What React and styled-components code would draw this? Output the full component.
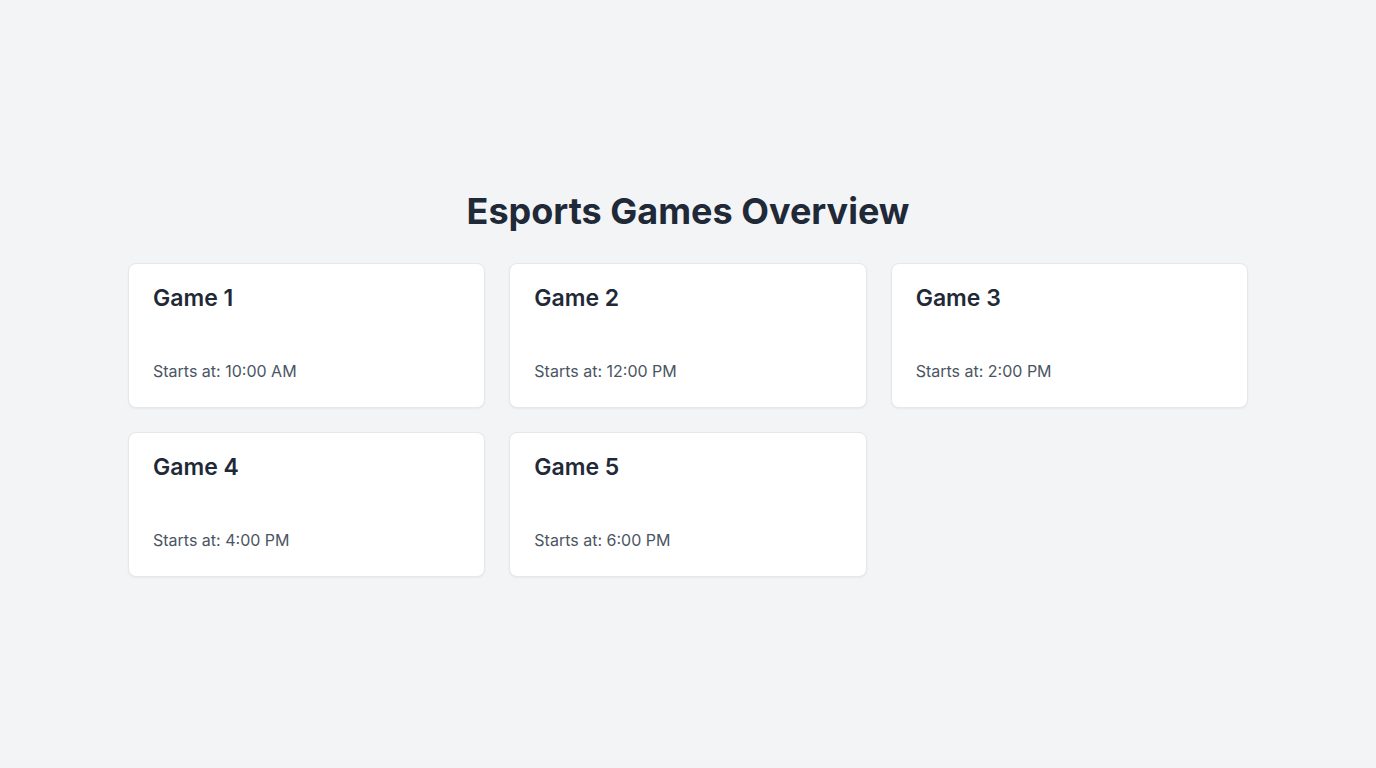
import React from 'react';
import styled, { createGlobalStyle } from 'styled-components';

const GlobalStyle = createGlobalStyle`
  * {
    box-sizing: border-box;
  }
  body {
    margin: 0;
    background: #f3f4f6;
    font-family: Inter, "Noto Sans", sans-serif;
  }
`;

const Page = styled.main`
  min-height: 100vh;
  display: flex;
  flex-direction: column;
  align-items: center;
  justify-content: center;
  padding: 0 16px;
`;

const Container = styled.div`
  width: 100%;
  max-width: 1120px;
`;

const Title = styled.h1`
  margin: 0 0 32px;
  text-align: center;
  font-size: 36px;
  line-height: 40px;
  font-weight: 700;
  color: #1f2937;
`;

const Grid = styled.div`
  display: grid;
  grid-template-columns: repeat(3, 1fr);
  gap: 24px;
`;

const Card = styled.div`
  background: #ffffff;
  border: 1px solid #e5e7eb;
  border-radius: 8px;
  box-shadow: 0 1px 2px rgba(0, 0, 0, 0.05);
  padding: 24px;
`;

const GameName = styled.h2`
  margin: 0 0 51px;
  font-size: 23px;
  line-height: 20px;
  font-weight: 600;
  color: #1f2937;
`;

const StartTime = styled.p`
  margin: 0;
  font-size: 16px;
  line-height: 24px;
  color: #4b5563;
`;

const games = [
  { id: 1, name: 'Game 1', time: '10:00 AM' },
  { id: 2, name: 'Game 2', time: '12:00 PM' },
  { id: 3, name: 'Game 3', time: '2:00 PM' },
  { id: 4, name: 'Game 4', time: '4:00 PM' },
  { id: 5, name: 'Game 5', time: '6:00 PM' },
];

const App = () => {
  return (
    <>
      <GlobalStyle />
      <Page>
        <Container>
          <Title>Esports Games Overview</Title>
          <Grid>
            {games.map((game) => (
              <Card key={game.id}>
                <GameName>{game.name}</GameName>
                <StartTime>Starts at: {game.time}</StartTime>
              </Card>
            ))}
          </Grid>
        </Container>
      </Page>
    </>
  );
};

export default App;
